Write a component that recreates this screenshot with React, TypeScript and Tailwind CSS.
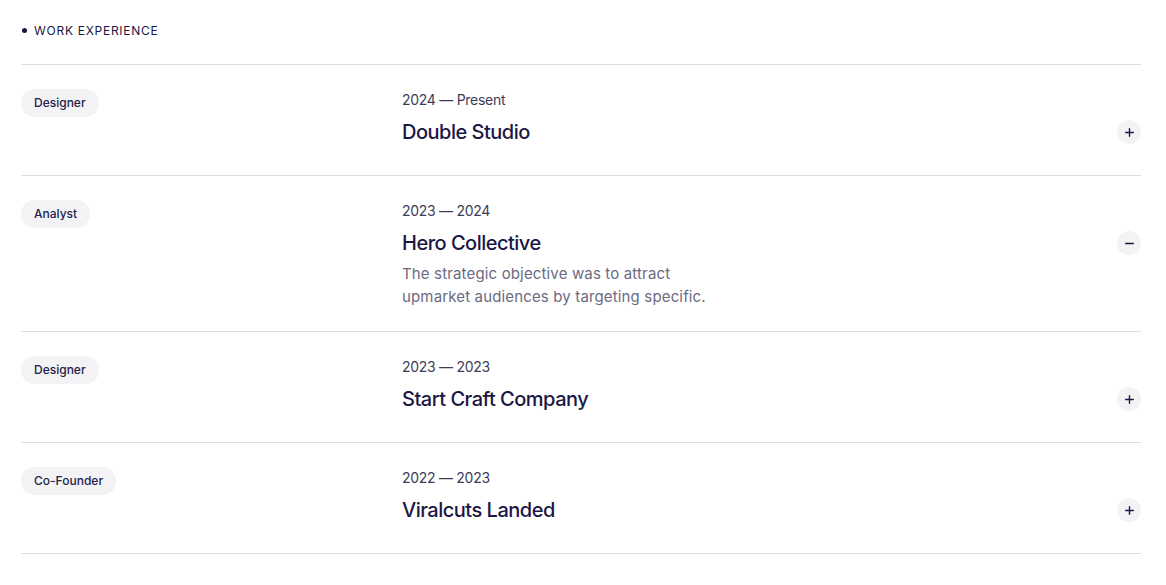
import { Minus, Plus } from "lucide-react";

type Job = {
  role: string;
  period: string;
  company: string;
  summary?: string;
};

const jobs: Job[] = [
  { role: "Designer", period: "2024 — Present", company: "Double Studio" },
  {
    role: "Analyst",
    period: "2023 — 2024",
    company: "Hero Collective",
    summary:
      "The strategic objective was to attract upmarket audiences by targeting specific.",
  },
  { role: "Designer", period: "2023 — 2023", company: "Start Craft Company" },
  { role: "Co-Founder", period: "2022 — 2023", company: "Viralcuts Landed" },
];

function JobRow({ job }: { job: Job }) {
  const open = Boolean(job.summary);
  return (
    <li
      className={`grid grid-cols-[381px_1fr_24px] border-b border-[#dcdce1] pt-6 ${
        open ? "pb-[23px]" : "pb-[29px]"
      }`}
    >
      <div>
        <span className="inline-flex h-7 items-center rounded-full bg-[#f3f3f5] px-[13px] text-[12px] font-medium text-[#23214a]">
          {job.role}
        </span>
      </div>
      <div className="pt-[1px]">
        <p className="text-[14px] leading-5 tracking-[-0.02em] text-[#3d3b58]">
          {job.period}
        </p>
        <h3 className="mt-2 text-[20px] font-medium leading-7 tracking-[-0.025em] text-[#1b1744]">
          {job.company}
        </h3>
        {open && (
          <p className="mt-[5px] max-w-[330px] text-[15px] leading-[23px] tracking-[0.01em] text-[#6b6a82]">
            {job.summary}
          </p>
        )}
      </div>
      <div className="mt-[31px]">
        <button className="flex h-6 w-6 items-center justify-center rounded-full bg-[#f3f3f5] text-[#1b1744]">
          {open ? (
            <Minus size={13} strokeWidth={2.6} />
          ) : (
            <Plus size={13} strokeWidth={2.6} />
          )}
        </button>
      </div>
    </li>
  );
}

export default function App() {
  return (
    <main className="min-h-screen bg-white px-[21px] pr-[25px] font-['Inter',sans-serif]">
      <div className="flex items-center gap-[7px] pt-[24px] pb-[27px]">
        <span className="ml-[1px] h-[5px] w-[5px] rounded-full bg-[#1b1744]" />
        <h2 className="text-[12px] font-normal leading-[13px] tracking-[0.06em] text-[#1b1744]">
          WORK EXPERIENCE
        </h2>
      </div>
      <ul className="border-t border-[#dcdce1]">
        {jobs.map((job) => (
          <JobRow key={job.company} job={job} />
        ))}
      </ul>
    </main>
  );
}
